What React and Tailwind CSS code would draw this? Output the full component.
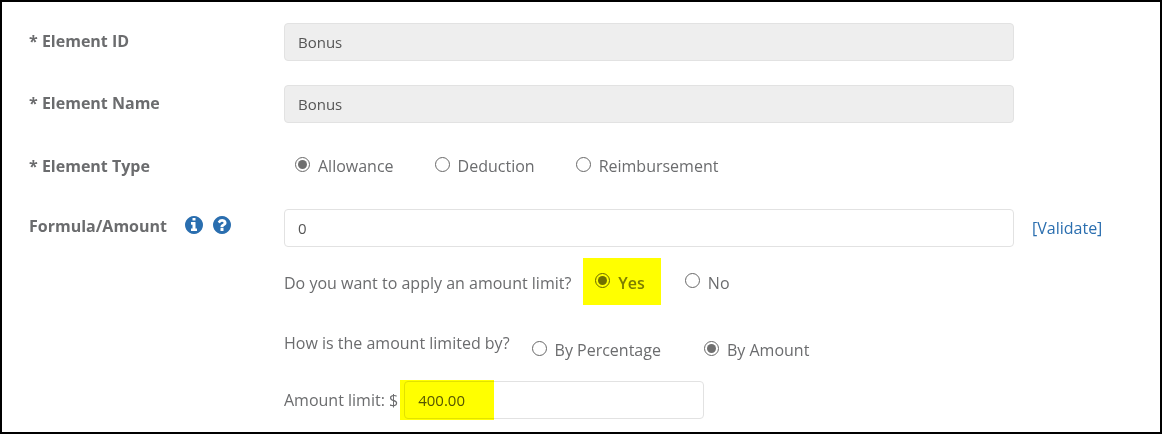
import { useState } from "react";

function InfoIcon() {
  return (
    <svg viewBox="0 128 1536 1536" className="size-[18px] fill-current" aria-hidden="true">
      <path d="M1024 1376v-160q0-14-9-23t-23-9h-96v-512q0-14-9-23t-23-9h-320q-14 0-23 9t-9 23v160q0 14 9 23t23 9h96v320h-96q-14 0-23 9t-9 23v160q0 14 9 23t23 9h448q14 0 23-9t9-23zm-128-896v-160q0-14-9-23t-23-9h-192q-14 0-23 9t-9 23v160q0 14 9 23t23 9h192q14 0 23-9t9-23zm640 416q0 209-103 385.5t-279.5 279.5-385.5 103-385.5-103-279.5-279.5-103-385.5 103-385.5 279.5-279.5 385.5-103 385.5 103 279.5 279.5 103 385.5z" />
    </svg>
  );
}

function HelpIcon() {
  return (
    <svg viewBox="128 128 1536 1536" className="size-[18px] fill-current" aria-hidden="true">
      <path d="M1024 1376v-192q0-14-9-23t-23-9h-192q-14 0-23 9t-9 23v192q0 14 9 23t23 9h192q14 0 23-9t9-23zm256-672q0-88-55.5-163t-138.5-116-170-41q-243 0-371 213-15 24 8 42l132 100q7 6 19 6 16 0 25-12 53-68 86-92 34-24 86-24 48 0 85.5 26t37.5 59q0 38-20 61t-68 45q-63 28-115.5 86.5t-52.5 125.5v36q0 14 9 23t23 9h192q14 0 23-9t9-23q0-19 21.5-49.5t54.5-49.5q32-18 49-28.5t46-35 44.5-48 28-60.5 12.5-81zm384 192q0 209-103 385.5t-279.5 279.5-385.5 103-385.5-103-279.5-279.5-103-385.5 103-385.5 279.5-279.5 385.5-103 385.5 103 279.5 279.5 103 385.5z" />
    </svg>
  );
}

function Radio({ name, label, value, onChange, strong }) {
  return (
    <label className={strong ? "flex items-center gap-2 font-semibold text-[#7d7e80]" : "flex items-center gap-2"}>
      <input
        type="radio"
        name={name}
        checked={value === label}
        onChange={() => onChange(label)}
        className="mb-1 grid size-[15px] appearance-none place-content-center rounded-full border border-[#686868] bg-white before:size-[9px] before:rounded-full checked:before:bg-[#707070]"
      />
      {label}
    </label>
  );
}

const field = "h-[38px] w-full rounded border border-[#e2e2e2] px-[13px] text-[15px] text-[#555]";
const row = "grid min-h-[38px] grid-cols-[255px_1fr_146px] items-center";

export default function App() {
  const [type, setType] = useState("Allowance");
  const [limited, setLimited] = useState("Yes");
  const [limitBy, setLimitBy] = useState("By Amount");

  return (
    <form className="min-h-screen border-2 border-black bg-white pt-[21px] pb-3 pl-[27px] font-['Open_Sans',sans-serif] text-base leading-6 text-[#6b6c6e]">
      <div className="flex flex-col gap-6">
        <div className={row}>
          <label htmlFor="element-id" className="mb-0.5 font-bold">* Element ID</label>
          <input id="element-id" readOnly defaultValue="Bonus" className={`${field} bg-[#eee]`} />
        </div>
        <div className={row}>
          <label htmlFor="element-name" className="mb-0.5 font-bold">* Element Name</label>
          <input id="element-name" readOnly defaultValue="Bonus" className={`${field} bg-[#eee]`} />
        </div>
        <div className={row} role="radiogroup" aria-labelledby="element-type">
          <span id="element-type" className="font-bold">* Element Type</span>
          <div className="flex gap-[41px] pl-[11px]">
            <Radio name="type" label="Allowance" value={type} onChange={setType} />
            <Radio name="type" label="Deduction" value={type} onChange={setType} />
            <Radio name="type" label="Reimbursement" value={type} onChange={setType} />
          </div>
        </div>
        <div className={row}>
          <div className="mb-1 flex items-center">
            <label htmlFor="formula" className="font-bold">Formula/Amount</label>
            <span className="mb-0.5 ml-[18px] flex gap-[10px] text-[#2a6eaf]">
              <button type="button" aria-label="Information"><InfoIcon /></button>
              <button type="button" aria-label="Help"><HelpIcon /></button>
            </span>
          </div>
          <input id="formula" defaultValue="0" className={field} />
          <a href="#validate" className="pl-[18px] text-[#2a6eaf]">[Validate]</a>
        </div>
      </div>

      <div className="mt-[11px] pl-[255px]">
        <div className="flex items-center" role="radiogroup" aria-labelledby="apply-limit">
          <span id="apply-limit" className="mr-3 pt-0.5">Do you want to apply an amount limit?</span>
          <div className="relative flex h-[47px] items-center pt-0.5 pr-4 pl-3">
            <Radio name="limited" label="Yes" value={limited} onChange={setLimited} strong />
            <span className="pointer-events-none absolute inset-0 bg-[#ff0] mix-blend-multiply" />
          </div>
          <div className="pt-0.5 pl-6">
            <Radio name="limited" label="No" value={limited} onChange={setLimited} />
          </div>
        </div>
        <div className="mt-[26px] flex items-start" role="radiogroup" aria-labelledby="limit-by">
          <span id="limit-by">How is the amount limited by?</span>
          <div className="flex gap-[43px] pt-[7px] pl-[22px]">
            <Radio name="limit-by" label="By Percentage" value={limitBy} onChange={setLimitBy} />
            <Radio name="limit-by" label="By Amount" value={limitBy} onChange={setLimitBy} />
          </div>
        </div>
        <div className="mt-[18px] flex items-center gap-0.5">
          <label htmlFor="amount-limit">Amount limit: $</label>
          <div className="relative flex h-10 w-[304px] items-center pl-1">
            <input id="amount-limit" defaultValue="400.00" className={field} />
            <span className="pointer-events-none absolute inset-y-0 left-0 w-[94px] bg-[#ff0] mix-blend-multiply" />
          </div>
        </div>
      </div>
    </form>
  );
}
